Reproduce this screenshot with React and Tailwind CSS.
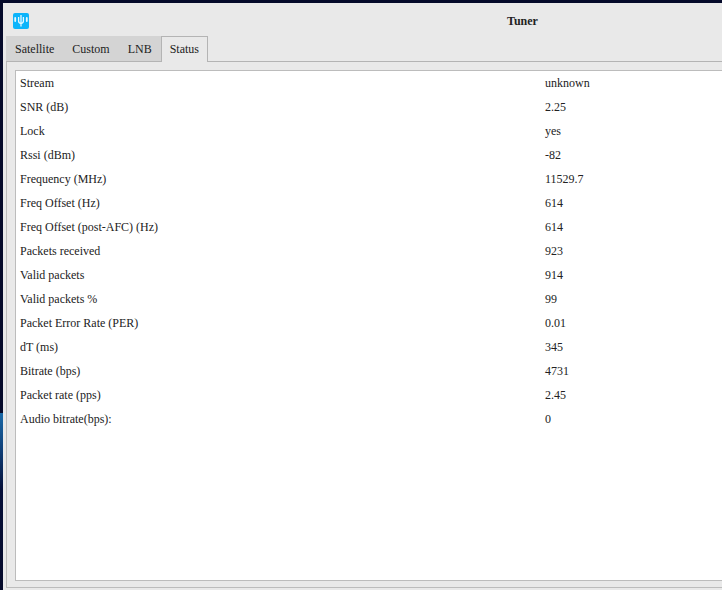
const ROWS = [
  ['Stream', 'unknown'],
  ['SNR (dB)', '2.25'],
  ['Lock', 'yes'],
  ['Rssi (dBm)', '-82'],
  ['Frequency (MHz)', '11529.7'],
  ['Freq Offset (Hz)', '614'],
  ['Freq Offset (post-AFC) (Hz)', '614'],
  ['Packets received', '923'],
  ['Valid packets', '914'],
  ['Valid packets %', '99'],
  ['Packet Error Rate (PER)', '0.01'],
  ['dT (ms)', '345'],
  ['Bitrate (bps)', '4731'],
  ['Packet rate (pps)', '2.45'],
  ['Audio bitrate(bps):', '0'],
];

const TABS = ['Satellite', 'Custom', 'LNB'];

function Logo() {
  return (
    <svg width="16" height="16" viewBox="0 0 16 16" className="block">
      <rect width="16" height="16" rx="2" fill="#0cb4fb" />
      <path d="M8 2v11.500M5.600 4v4Q5.600 10 8 10.500Q10.400 10 10.400 8V4" fill="none" stroke="#e6f7ff" strokeWidth="1.300" />
      <path d="M2.200 5v3M13.800 5v3" fill="none" stroke="#e6f7ff" strokeWidth="1.800" strokeLinecap="round" />
    </svg>
  );
}

export default function App() {
  return (
    <div className="h-[590px] w-[722px] overflow-hidden bg-[linear-gradient(180deg,#050a2a_0,#050a2a_413px,#1a6aa8_413px,#0f3f78_450px,#050f38_490px,#050a2a_590px)] pl-[3px] pt-[3px] font-['Liberation_Serif',serif] text-[12px] text-[#222]">
      <div className="h-[587px] bg-[#e9e9e9] pl-[3px]">
        <div className="flex h-[33px] items-start">
          <div className="ml-[7px] mt-[10px]">
            <Logo />
          </div>
          <div className="ml-[478px] mt-[9px] text-[12px] font-bold">Tuner</div>
        </div>
        <div className="flex h-[26px] items-stretch border-b border-[#b4b4b4]">
          <div className="flex bg-[#d4d4d4]">
            {TABS.map((t) => (
              <div key={t} className="px-[9px] pt-[4px]">{t}</div>
            ))}
          </div>
          <div className="-mb-px border border-b-0 border-[#b4b4b4] bg-[#e9e9e9] px-[8px] pt-[3px]">Status</div>
        </div>
        <div className="h-[526px] border-b border-l border-[#bcbcbc] pl-[8px] pt-[8px]">
          <div className="h-[511px] border border-r-0 border-[#bcbcbc] bg-white pl-[4px]">
            {ROWS.map(([k, v]) => (
              <div key={k} className="flex h-[24px] items-center">
                <div className="w-[525px]">{k}</div>
                <div>{v}</div>
              </div>
            ))}
          </div>
        </div>
      </div>
    </div>
  );
}
